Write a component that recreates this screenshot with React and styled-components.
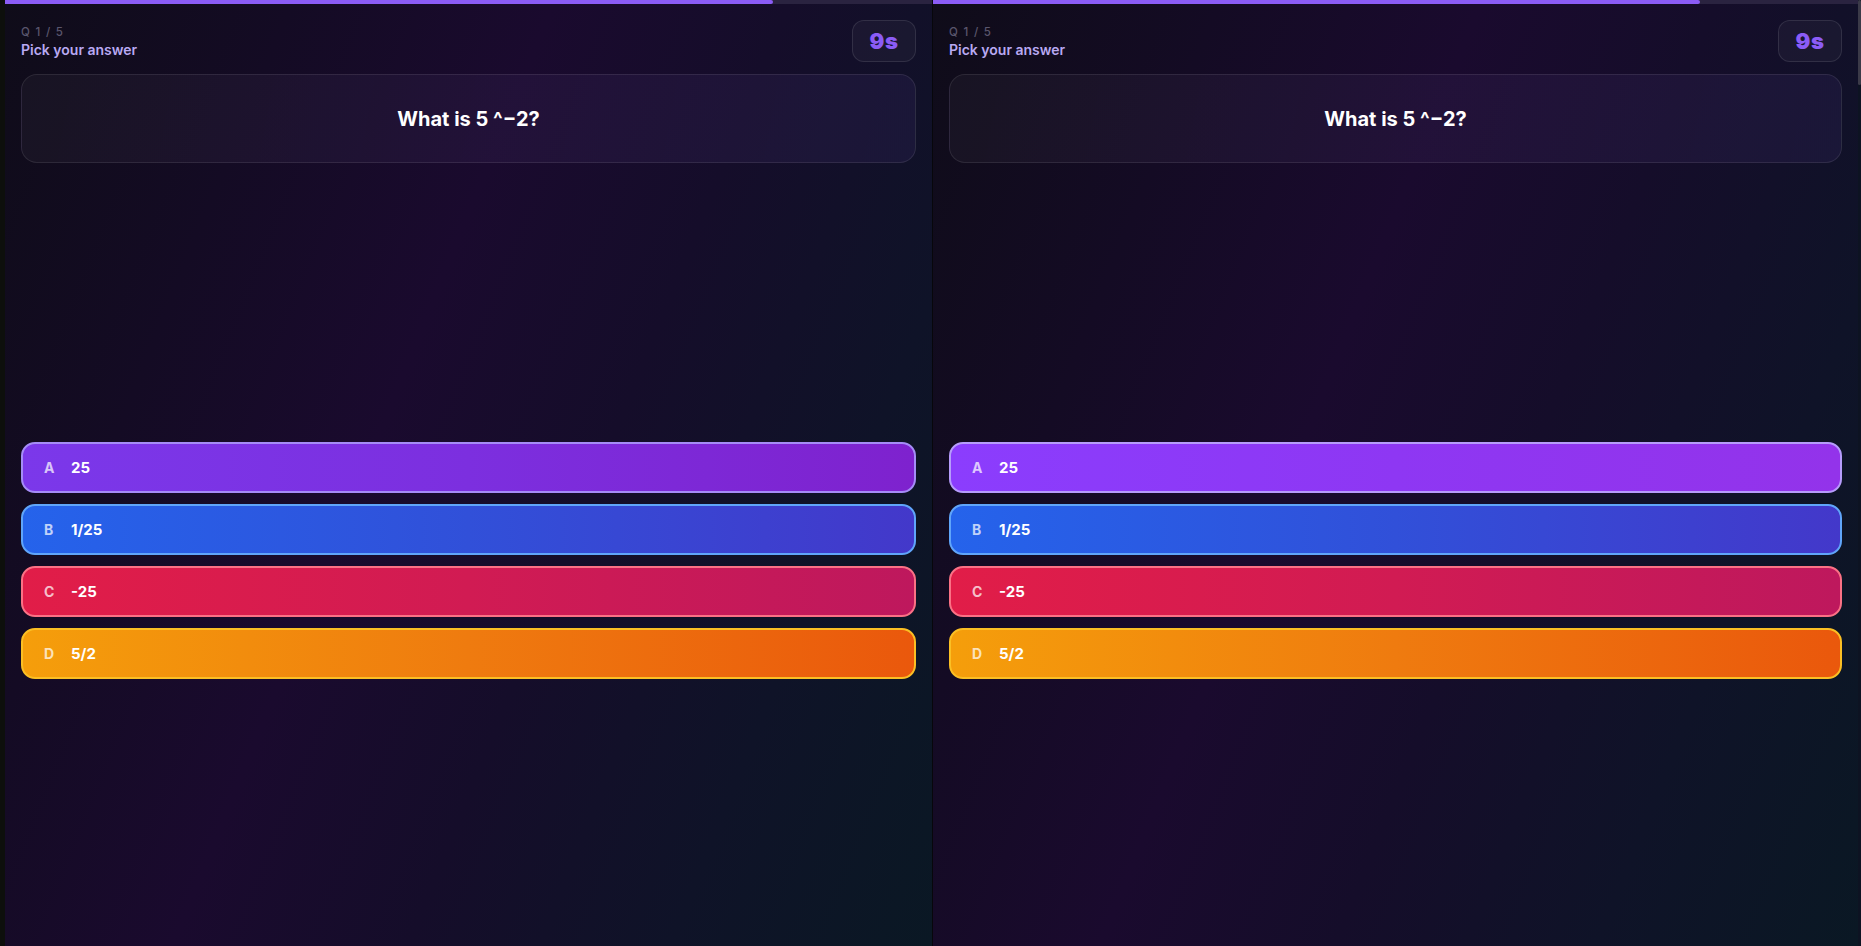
import styled, { createGlobalStyle } from "styled-components";

const GlobalStyle = createGlobalStyle`
  html, body {
    margin: 0;
    padding: 0;
    background: #0c0d0b;
    font-family: Inter, "Noto Sans", "Liberation Sans", sans-serif;
    overflow: hidden;
  }
`;

const answers = [
  { key: "A", text: "25", tone: "purple" },
  { key: "B", text: "1/25", tone: "blue" },
  { key: "C", text: "-25", tone: "red" },
  { key: "D", text: "5/2", tone: "orange" },
];

const tones = {
  purple: {
    bg: "linear-gradient(90deg, #7b38ea 0%, #7c2fdf 50%, #7e22ce 100%)",
    border: "#a58cf7",
  },
  purpleBright: {
    bg: "linear-gradient(90deg, #8b3dfd 0%, #8e37f3 50%, #9333ea 100%)",
    border: "#b69cfb",
  },
  blue: {
    bg: "linear-gradient(90deg, #2563eb 0%, #3150d9 50%, #4338ca 100%)",
    border: "#60a5fa",
  },
  red: {
    bg: "linear-gradient(90deg, #e11d48 0%, #d11b53 50%, #be185d 100%)",
    border: "#fb7185",
  },
  orange: {
    bg: "linear-gradient(90deg, #f59e0b 0%, #ef7b0f 50%, #ea580c 100%)",
    border: "#fbbf24",
  },
};

const Screen = styled.div`
  display: flex;
  height: 946px;
  width: 1861px;
`;

const Edge = styled.div`
  width: 5px;
  flex-shrink: 0;
  background: #0d0f0c;
`;

const Divider = styled.div`
  width: 1px;
  flex-shrink: 0;
  background: #07070b;
`;

const Panel = styled.div`
  width: ${(p) => p.$width}px;
  flex-shrink: 0;
  display: flex;
  flex-direction: column;
  background: linear-gradient(
    112deg,
    #0f0c19 0%,
    #140b24 22%,
    #1a0a2e 42%,
    #150d2a 60%,
    #0f1328 80%,
    #0a1824 100%
  );
`;

const Scrollbar = styled.div`
  width: 3px;
  flex-shrink: 0;
  background: #0d1322;
`;

const Thumb = styled.div`
  height: 85px;
  background: #3b3a48;
  border-radius: 2px;
`;

const Track = styled.div`
  height: 4px;
  background: #2a2340;
`;

const Fill = styled.div`
  height: 100%;
  background: #8b5cf6;
  border-radius: 0 2px 2px 0;
`;

const Body = styled.div`
  flex: 1;
  display: flex;
  flex-direction: column;
  padding: 16px;
  gap: 12px;
`;

const Header = styled.div`
  display: flex;
  align-items: center;
  justify-content: space-between;
  height: 42px;
`;

const Titles = styled.div`
  display: flex;
  flex-direction: column;
  gap: 2px;
  padding-top: 1px;
`;

const Counter = styled.div`
  font-size: 11.5px;
  letter-spacing: 1.3px;
  color: #5a566d;
  font-weight: 500;
`;

const Prompt = styled.div`
  font-size: 14px;
  font-weight: 600;
  color: #b9a9f2;
`;

const Timer = styled.div`
  width: 64px;
  height: 42px;
  box-sizing: border-box;
  display: flex;
  align-items: center;
  justify-content: center;
  border: 1px solid rgba(255, 255, 255, 0.1);
  border-radius: 12px;
  background: rgba(255, 255, 255, 0.035);
  color: #8b5cf6;
  font-size: 22px;
  font-weight: 900;
  letter-spacing: 0.5px;
`;

const QuestionCard = styled.div`
  height: 89px;
  box-sizing: border-box;
  display: flex;
  align-items: center;
  justify-content: center;
  border: 1px solid rgba(255, 255, 255, 0.09);
  border-radius: 16px;
  background: linear-gradient(
    100deg,
    rgba(255, 255, 255, 0.035) 0%,
    rgba(160, 110, 255, 0.07) 100%
  );
  color: #ffffff;
  font-size: 20px;
  font-weight: 700;
`;

const AnswerArea = styled.div`
  flex: 1;
  display: flex;
  flex-direction: column;
  justify-content: center;
  gap: 11px;
  padding-top: 16px;
`;

const AnswerButton = styled.button`
  height: 51px;
  box-sizing: border-box;
  display: flex;
  align-items: center;
  padding: 0 0 0 21px;
  border: 2px solid ${(p) => tones[p.$tone].border};
  border-radius: 14px;
  background: ${(p) => tones[p.$tone].bg};
  font-family: inherit;
  cursor: pointer;
  text-align: left;
`;

const Letter = styled.span`
  width: 27px;
  font-size: 14px;
  font-weight: 700;
  color: rgba(255, 255, 255, 0.72);
`;

const AnswerText = styled.span`
  font-size: 15px;
  font-weight: 700;
  color: #ffffff;
`;

function QuizPanel({ width, brightFirst }) {
  return (
    <Panel $width={width}>
      <Track>
        <Fill style={{ width: "82.9%" }} />
      </Track>
      <Body>
        <Header>
          <Titles>
            <Counter>Q 1 / 5</Counter>
            <Prompt>Pick your answer</Prompt>
          </Titles>
          <Timer>9s</Timer>
        </Header>
        <QuestionCard>What is 5 ^−2?</QuestionCard>
        <AnswerArea>
          {answers.map((a, i) => (
            <AnswerButton
              key={a.key}
              $tone={brightFirst && i === 0 ? "purpleBright" : a.tone}
            >
              <Letter>{a.key}</Letter>
              <AnswerText>{a.text}</AnswerText>
            </AnswerButton>
          ))}
        </AnswerArea>
      </Body>
    </Panel>
  );
}

export default function App() {
  return (
    <>
      <GlobalStyle />
      <Screen>
        <Edge />
        <QuizPanel width={927} />
        <Divider />
        <QuizPanel width={925} brightFirst />
        <Scrollbar>
          <Thumb />
        </Scrollbar>
      </Screen>
    </>
  );
}
